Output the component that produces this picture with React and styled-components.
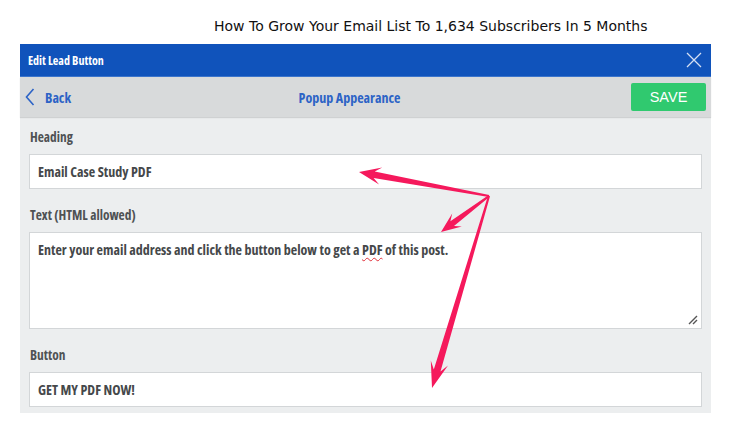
import React from "react";
import styled, { createGlobalStyle } from "styled-components";

const GlobalStyle = createGlobalStyle`
  body {
    margin: 0;
    background: #ffffff;
    font-family: "Open Sans", "DejaVu Sans", sans-serif;
  }
`;

const Page = styled.div`
  position: relative;
  width: 740px;
  height: 440px;
  overflow: hidden;
`;

const Title = styled.h1`
  margin: 0;
  height: 44px;
  padding-left: 214px;
  box-sizing: border-box;
  font-family: "DejaVu Sans", sans-serif;
  font-weight: normal;
  font-size: 14px;
  line-height: 53px;
  color: #111;
  white-space: nowrap;
`;

const Panel = styled.div`
  width: 691px;
  margin-left: 20px;
  background: #eceeef;
  font-family: "Open Sans", sans-serif;
  font-stretch: 75%;
`;

const TopBar = styled.div`
  height: 33px;
  background: #1053bb;
  display: flex;
  align-items: center;
  justify-content: space-between;
  padding: 0 9px 0 8px;
  border-bottom: 1px solid #3a74cc;
  box-sizing: border-box;
`;

const TopTitle = styled.span`
  color: #fff;
  font-weight: 700;
  font-size: 12px;
`;

const NavBar = styled.div`
  height: 40px;
  background: #d8dadb;
  display: grid;
  grid-template-columns: 1fr auto 1fr;
  align-items: center;
  padding: 0 5px 0 5px;
  box-shadow: 0 1px 1px rgba(0, 0, 0, 0.12);
  position: relative;
`;

const BackLink = styled.div`
  display: flex;
  align-items: center;
  gap: 10px;
  color: #2c63c6;
  font-weight: 700;
  font-size: 14px;
`;

const NavTitle = styled.div`
  color: #2c63c6;
  font-weight: 700;
  font-size: 14px;
  padding-right: 32px;
`;

const SaveButton = styled.button`
  justify-self: end;
  width: 75px;
  height: 28px;
  border: none;
  border-radius: 2px;
  background: #30c96f;
  color: #fff;
  font-family: "Liberation Sans", Arial, sans-serif;
  font-size: 14.5px;
  font-weight: 400;
  padding: 0;
`;

const Body = styled.div`
  padding: 9px 9px 6px 9px;
`;

const Field = styled.div`
  & + & {
    margin-top: 15px;
  }
`;

const Label = styled.div`
  height: 22px;
  line-height: 22px;
  margin: 0 0 6px 1px;
  font-weight: 700;
  font-size: 13.4px;
  color: #4f5254;
`;

const Box = styled.div`
  position: relative;
  box-sizing: border-box;
  height: ${(p) => p.$h}px;
  background: #fff;
  border: 1px solid #d3d6d8;
  padding: ${(p) => (p.$multi ? "7px 8px" : "0 8px")};
  display: flex;
  align-items: ${(p) => (p.$multi ? "flex-start" : "center")};
  font-weight: 700;
  font-size: 14px;
  line-height: 20px;
  color: #45484a;
`;

const Misspelled = styled.span`
  text-decoration: underline wavy #e0303a;
  text-decoration-thickness: 1px;
  text-underline-offset: 2px;
`;

const Grip = styled.svg`
  position: absolute;
  right: 3px;
  bottom: 3px;
`;

const Overlay = styled.svg`
  position: absolute;
  left: 0;
  top: 0;
  pointer-events: none;
`;

function arrowPoints([sx, sy], [tx, ty], w0, w1, len, wide) {
  const dx = tx - sx;
  const dy = ty - sy;
  const d = Math.hypot(dx, dy);
  const ux = dx / d;
  const uy = dy / d;
  const px = -uy;
  const py = ux;
  const at = (k, s) => [tx - ux * k + px * s, ty - uy * k + py * s];
  const pts = [
    [sx + (px * w0) / 2, sy + (py * w0) / 2],
    at(len * 0.7, w1 / 2),
    at(len, wide / 2),
    [tx, ty],
    at(len, -wide / 2),
    at(len * 0.7, -w1 / 2),
    [sx - (px * w0) / 2, sy - (py * w0) / 2],
  ];
  return pts.map((p) => p.map((v) => v.toFixed(1)).join(",")).join(" ");
}

const origin = [489, 196];
const arrows = [
  { tip: [359, 172], len: 22, wide: 17, w1: 6.5 },
  { tip: [441, 232], len: 20, wide: 16, w1: 6 },
  { tip: [432, 388], len: 26, wide: 18, w1: 7 },
];

export default function App() {
  return (
    <Page>
      <GlobalStyle />
      <Title>How To Grow Your Email List To 1,634 Subscribers In 5 Months</Title>
      <Panel>
        <TopBar>
          <TopTitle>Edit Lead Button</TopTitle>
          <svg width="16" height="16" viewBox="0 0 16 16">
            <path d="M1 1 L15 15 M15 1 L1 15" stroke="#d6e0f3" strokeWidth="1.3" fill="none" />
          </svg>
        </TopBar>
        <NavBar>
          <BackLink>
            <svg width="10" height="18" viewBox="0 0 10 18">
              <path d="M8.5 1 L1.5 9 L8.5 17" stroke="#2c63c6" strokeWidth="1.6" fill="none" />
            </svg>
            Back
          </BackLink>
          <NavTitle>Popup Appearance</NavTitle>
          <SaveButton>SAVE</SaveButton>
        </NavBar>
        <Body>
          <Field>
            <Label>Heading</Label>
            <Box $h={35}>Email Case Study PDF</Box>
          </Field>
          <Field>
            <Label>Text (HTML allowed)</Label>
            <Box $h={97} $multi>
              <span>
                Enter your email address and click the button below to get a{" "}
                <Misspelled>PDF</Misspelled> of this post.
              </span>
              <Grip width="12" height="12" viewBox="0 0 12 12">
                <path d="M11 3 L3 11 M11 7 L7 11" stroke="#555" strokeWidth="1.4" />
              </Grip>
            </Box>
          </Field>
          <Field>
            <Label>Button</Label>
            <Box $h={35}>GET MY PDF NOW!</Box>
          </Field>
        </Body>
      </Panel>
      <Overlay width="740" height="440">
        {arrows.map((a, i) => (
          <polygon
            key={i}
            points={arrowPoints(origin, a.tip, 2, a.w1, a.len, a.wide)}
            fill="#f5195c"
          />
        ))}
      </Overlay>
    </Page>
  );
}
